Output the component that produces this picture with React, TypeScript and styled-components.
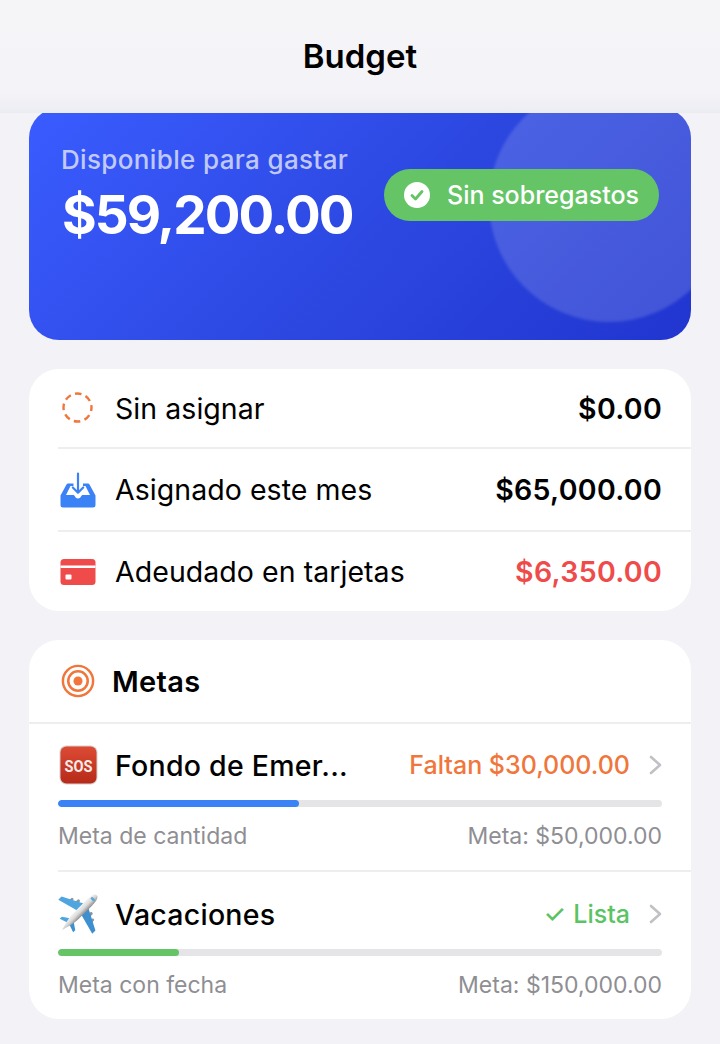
import React from "react";
import styled, { createGlobalStyle } from "styled-components";

const Global = createGlobalStyle`
  html, body { margin: 0; padding: 0; background: #f2f2f7; }
  body { font-family: Inter, "Liberation Sans", sans-serif; -webkit-font-smoothing: antialiased; }
`;

const Screen = styled.div`
  width: 720px;
  height: 1044px;
  overflow: hidden;
  background: #f2f2f7;
`;

const NavBar = styled.header`
  position: relative;
  z-index: 2;
  height: 112px;
  box-sizing: content-box;
  border-bottom: 1px solid #ebebf0;
  background: linear-gradient(180deg, #f5f5f8 0%, #f4f4f8 82%, #ececf3 100%);
  display: flex;
  align-items: center;
  justify-content: center;
`;

const NavTitle = styled.h1`
  margin: 0;
  font-size: 33px;
  line-height: 38px;
  font-weight: 600;
  color: #000;
`;

const Content = styled.main`
  margin-top: -5px;
  padding: 0 29px;
  display: flex;
  flex-direction: column;
  gap: 29px;
`;

const Hero = styled.section`
  position: relative;
  overflow: hidden;
  height: 232px;
  border-radius: 30px;
  box-sizing: border-box;
  padding: 36px 32px 0 33px;
  display: flex;
  justify-content: space-between;
  align-items: flex-start;
  background: linear-gradient(135deg, #3a5cff 0%, #2c47e0 55%, #2135cf 100%);
`;

const HeroGlow = styled.div`
  position: absolute;
  top: -26px;
  right: -38px;
  width: 240px;
  height: 240px;
  border-radius: 50%;
  background: rgba(255, 255, 255, 0.15);
  filter: blur(1.5px);
`;

const HeroText = styled.div`
  position: relative;
  display: flex;
  flex-direction: column;
`;

const HeroLabel = styled.div`
  font-size: 26px;
  line-height: 32px;
  font-weight: 500;
  letter-spacing: 0.35px;
  color: rgba(255, 255, 255, 0.7);
  margin-left: -1px;
`;

const HeroAmount = styled.div`
  margin-top: 8px;
  font-size: 53px;
  line-height: 62px;
  font-weight: 700;
  letter-spacing: -1.95px;
  color: #fff;
`;

const StatusPill = styled.div`
  position: relative;
  margin-top: 25px;
  height: 52px;
  width: 275px;
  box-sizing: border-box;
  border-radius: 26px;
  background: #65c466;
  padding-left: 20px;
  display: flex;
  align-items: center;
  gap: 17px;
  color: #fff;
  font-size: 25px;
  font-weight: 500;
`;

const Card = styled.section`
  background: #fff;
  border-radius: 30px;
  overflow: hidden;
`;

const SummaryRow = styled.div<{ $height: number; $last?: boolean }>`
  height: ${(p) => p.$height}px;
  box-sizing: border-box;
  margin-left: 29px;
  padding-right: 29px;
  display: flex;
  align-items: center;
  border-bottom: ${(p) => (p.$last ? "none" : "2px solid #eeeef1")};
`;

const IconSlot = styled.span`
  width: 40px;
  height: 40px;
  flex: none;
  display: flex;
  align-items: center;
  justify-content: center;
`;

const RowLabel = styled.span`
  margin-left: 17px;
  font-size: 28.5px;
  font-weight: 400;
  color: #000;
  letter-spacing: 0.05px;
  flex: 1;
`;

const RowValue = styled.span<{ $color?: string }>`
  font-size: 28.5px;
  font-weight: 600;
  letter-spacing: 0.3px;
  color: ${(p) => p.$color ?? "#000"};
`;

const CardHeader = styled.div`
  height: 84px;
  box-sizing: border-box;
  padding-left: 29px;
  display: flex;
  align-items: center;
  border-bottom: 2px solid #eeeef1;
`;

const CardTitle = styled.h2`
  margin: 1px 0 0 14px;
  font-size: 29px;
  font-weight: 600;
  letter-spacing: 0.3px;
  color: #000;
`;

const Goal = styled.div<{ $last?: boolean }>`
  margin-left: 29px;
  padding-right: 29px;
  height: ${(p) => (p.$last ? 147 : 148)}px;
  box-sizing: border-box;
  padding-top: ${(p) => (p.$last ? 21 : 20)}px;
  border-bottom: ${(p) => (p.$last ? "none" : "2px solid #eeeef1")};
`;

const GoalTop = styled.div`
  height: 42px;
  display: flex;
  align-items: center;
`;

const GoalName = styled(RowLabel)`
  font-weight: 500;
  letter-spacing: 0.25px;
`;

const GoalStatus = styled.span<{ $color: string }>`
  font-size: 25px;
  font-weight: 500;
  color: ${(p) => p.$color};
  white-space: nowrap;
`;

const StatusMark = styled.span`
  margin-right: 1px;
`;

const Chevron = styled.svg`
  margin-left: 19px;
  flex: none;
`;

const Track = styled.div`
  margin-top: 14px;
  height: 7px;
  border-radius: 4px;
  background: #e5e5e8;
  overflow: hidden;
`;

const Fill = styled.div<{ $color: string }>`
  height: 100%;
  border-radius: 4px;
  background: ${(p) => p.$color};
`;

const GoalFoot = styled.div`
  margin-top: 14px;
  display: flex;
  justify-content: space-between;
  font-size: 23px;
  line-height: 30px;
  color: #8e8e93;
`;

const ChevronIcon = () => (
  <Chevron width="13" height="22" viewBox="0 0 13 22" fill="none">
    <path d="M2 3l9 8-9 8" stroke="#c1c1c5" strokeWidth="2.6" strokeLinecap="round" strokeLinejoin="round" />
  </Chevron>
);

const DashedCircle = () => (
  <svg width="32" height="32" viewBox="0 0 32 32" fill="none">
    <circle cx="15.5" cy="15.500" r="14" stroke="#f0763c" strokeWidth="2.4" strokeDasharray="6.6 4.4" strokeDashoffset="3" />
  </svg>
);

const InboxIcon = () => (
  <svg width="36" height="36" viewBox="0 0 36 36" fill="none">
    <path
      d="M8 11.500h5.500V14h-3L6 23h7c1 0 1.500.5 2 1.500.6 1.300 1.500 2 3 2s2.400-.7 3-2c.5-1 1-1.500 2-1.500h7l-4.500-9H23v-2.500h5c.7 0 1.200.3 1.500 1l6 11V33c0 1.700-1 2.500-2.500 2.500H3C1.500 35.500.5 34.700.5 33v-9.500l6-11c.3-.7.8-1 1.500-1z"
      fill="#3b82f6"
    />
    <path d="M18 1.500V20.500M12.800 15.500l5.200 5.200 5.200-5.200" stroke="#3b82f6" strokeWidth="2.200" strokeLinecap="round" strokeLinejoin="round" />
  </svg>
);

const CardIcon = () => (
  <svg width="36" height="28" viewBox="0 0 36 28" fill="none">
    <rect x="0.5" y="1" width="35" height="26" rx="3.500" fill="#ef4b4b" />
    <rect x="0.5" y="7.500" width="35" height="2.500" fill="#fff" />
    <rect x="5.500" y="16.500" width="6" height="5" rx="1" fill="#fff" />
  </svg>
);

const TargetIcon = () => (
  <svg width="34" height="34" viewBox="0 0 36 36" fill="none">
    <circle cx="18" cy="18" r="16" stroke="#f0763c" strokeWidth="2.600" />
    <circle cx="18" cy="18" r="10.300" stroke="#f0763c" strokeWidth="2.700" />
    <circle cx="18" cy="18" r="4.800" fill="#f0763c" />
  </svg>
);

const SosBadge = () => (
  <svg width="39" height="40" viewBox="0 0 39 40">
    <defs>
      <linearGradient id="sos-fill" x1="0" y1="0" x2="0" y2="1">
        <stop offset="0" stopColor="#dc4b34" />
        <stop offset="1" stopColor="#b72a19" />
      </linearGradient>
    </defs>
    <rect x="0.500" y="0.500" width="38" height="39" rx="7" fill="#a8a29f" opacity="0.5" />
    <rect x="1.500" y="1.500" width="36" height="37" rx="6" fill="url(#sos-fill)" />
    <text
      x="19.500"
      y="26.500"
      textAnchor="middle"
      textLength="28"
      lengthAdjust="spacingAndGlyphs"
      fontFamily="Roboto, sans-serif"
      fontWeight="700"
      fontSize="17"
      fill="#f6ece9"
    >
      SOS
    </text>
  </svg>
);

const PlaneIcon = () => (
  <svg width="42" height="42" viewBox="0 0 42 42" overflow="visible">
    <defs>
      <linearGradient id="plane-body" x1="0" y1="0" x2="1" y2="0">
        <stop offset="0" stopColor="#f4f4f4" />
        <stop offset="0.5" stopColor="#d9d9d9" />
        <stop offset="1" stopColor="#8f8f8f" />
      </linearGradient>
    </defs>
    <g transform="translate(1.5 -1.5) rotate(45 21 21)">
      <rect x="10.500" y="12" width="3" height="7" rx="1.300" fill="#8e959b" />
      <rect x="28.500" y="12" width="3" height="7" rx="1.300" fill="#8e959b" />
      <rect x="5" y="15.500" width="2.800" height="7" rx="1.300" fill="#8e959b" />
      <rect x="34.200" y="15.500" width="2.800" height="7" rx="1.300" fill="#8e959b" />
      <path d="M19 11 L-3 22.500 V27 L19 21z" fill="#4ea5e0" />
      <path d="M23 11 L45 22.500 V27 L23 21z" fill="#3d8fcf" />
      <path d="M19.500 31 L11.500 36.500 V39.500 L20 36.500z" fill="#4ea5e0" />
      <path d="M22.500 31 L30.500 36.500 V39.500 L22 36.500z" fill="#3d8fcf" />
      <path d="M21 -3.500 C24 -3.500 25 2 25 8 V27 C25 33 22.500 40 21 46 C19.500 40 17 33 17 27 V8 C17 2 18 -3.500 21 -3.500z" fill="url(#plane-body)" />
      <path d="M18.500 1.500 C19.500 0.300 22.500 0.300 23.500 1.500 L23 3.500 H19z" fill="#5fa8d8" />
    </g>
  </svg>
);

export default function App() {
  return (
    <Screen>
      <Global />
      <NavBar>
        <NavTitle>Budget</NavTitle>
      </NavBar>
      <Content>
        <Hero>
          <HeroGlow />
          <HeroText>
            <HeroLabel>Disponible para gastar</HeroLabel>
            <HeroAmount>$59,200.00</HeroAmount>
          </HeroText>
          <StatusPill>
            <svg width="26" height="26" viewBox="0 0 26 26" style={{ flex: "none" }}>
              <circle cx="13" cy="13" r="13" fill="#fff" />
              <path d="M8 13.500l3.500 3.500L18 9.500" fill="none" stroke="#65c466" strokeWidth="2.800" strokeLinecap="round" strokeLinejoin="round" />
            </svg>
            Sin sobregastos
          </StatusPill>
        </Hero>

        <Card>
          <SummaryRow $height={80}>
            <IconSlot><DashedCircle /></IconSlot>
            <RowLabel>Sin asignar</RowLabel>
            <RowValue>$0.00</RowValue>
          </SummaryRow>
          <SummaryRow $height={83}>
            <IconSlot><InboxIcon /></IconSlot>
            <RowLabel>Asignado este mes</RowLabel>
            <RowValue>$65,000.00</RowValue>
          </SummaryRow>
          <SummaryRow $height={79} $last>
            <IconSlot><CardIcon /></IconSlot>
            <RowLabel>Adeudado en tarjetas</RowLabel>
            <RowValue $color="#ef4b4b">$6,350.00</RowValue>
          </SummaryRow>
        </Card>

        <Card>
          <CardHeader>
            <IconSlot><TargetIcon /></IconSlot>
            <CardTitle>Metas</CardTitle>
          </CardHeader>
          <Goal>
            <GoalTop>
              <IconSlot><SosBadge /></IconSlot>
              <GoalName>Fondo de Emer...</GoalName>
              <GoalStatus $color="#f0763c">Faltan $30,000.00</GoalStatus>
              <ChevronIcon />
            </GoalTop>
            <Track><Fill $color="#3b82f6" style={{ width: `${(241 / 604) * 100}%` }} /></Track>
            <GoalFoot>
              <span>Meta de cantidad</span>
              <span>Meta: $50,000.00</span>
            </GoalFoot>
          </Goal>
          <Goal $last>
            <GoalTop>
              <IconSlot><PlaneIcon /></IconSlot>
              <GoalName>Vacaciones</GoalName>
              <GoalStatus $color="#5ac463"><StatusMark>✓</StatusMark> Lista</GoalStatus>
              <ChevronIcon />
            </GoalTop>
            <Track><Fill $color="#65c466" style={{ width: `${(121 / 604) * 100}%` }} /></Track>
            <GoalFoot>
              <span>Meta con fecha</span>
              <span>Meta: $150,000.00</span>
            </GoalFoot>
          </Goal>
        </Card>
      </Content>
    </Screen>
  );
}
